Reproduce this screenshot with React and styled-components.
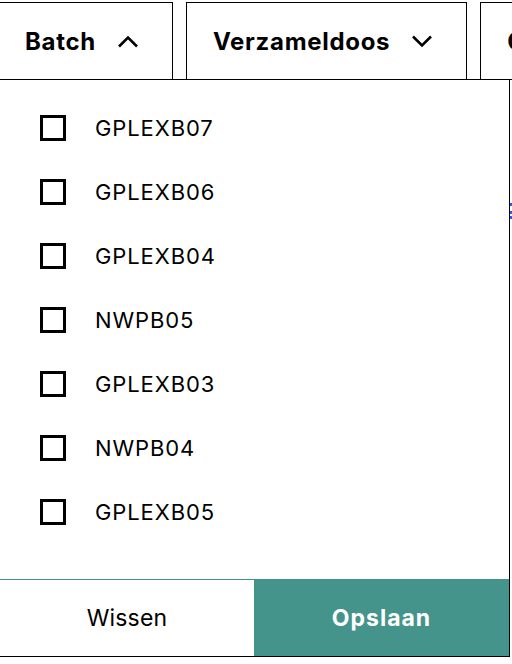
import React from "react";
import styled, { createGlobalStyle } from "styled-components";

const Global = createGlobalStyle`
  html, body { margin: 0; padding: 0; background: #fff; }
  body { width: 512px; height: 664px; overflow: hidden; font-family: Inter, "Noto Sans", sans-serif; color: #000; }
  * { box-sizing: border-box; }
`;

const Page = styled.div`
  position: relative;
  width: 512px;
  height: 664px;
  overflow: hidden;
`;

const TabRow = styled.div`
  display: flex;
  gap: 13px;
  margin-left: -2px;
  padding-top: 2px;
  width: 530px;
  overflow: hidden;
`;

const Tab = styled.button`
  flex: none;
  display: flex;
  align-items: center;
  gap: 21px;
  height: 78px;
  padding: 0 33px 0 26px;
  background: #fff;
  border: 1px solid #000;
  font-family: inherit;
  font-size: 24px;
  font-weight: 700;
  letter-spacing: 0.7px;
  color: #000;
  cursor: pointer;
`;

const Content = styled.div`
  display: flex;
  justify-content: flex-end;
  padding-top: 122px;
  margin-right: -14px;
`;

const LinkIcon = styled.svg`
  display: block;
  width: 18px;
  height: 18px;
`;

const Panel = styled.div`
  position: absolute;
  top: 79px;
  left: -1px;
  width: 511px;
  height: 578px;
  background: #fff;
  border: 1px solid #000;
  display: flex;
  flex-direction: column;
`;

const List = styled.ul`
  list-style: none;
  margin: 0;
  padding: 16px 0 0 0;
  flex: 1;
`;

const Row = styled.li`
  display: flex;
  align-items: center;
  gap: 29px;
  height: 64px;
  padding-left: 40px;
  font-size: 22px;
  font-weight: 400;
  letter-spacing: 0.9px;
`;

const Box = styled.span`
  width: 26px;
  height: 26px;
  border: 3px solid #000;
  background: #fff;
  flex: none;
`;

const Footer = styled.div`
  display: grid;
  grid-template-columns: 254px 1fr;
  height: 77px;
  border-top: 1px solid #44948c;
`;

const FooterButton = styled.button`
  border: 0;
  margin: 0;
  font-family: inherit;
  font-size: 23px;
  letter-spacing: ${(p) => (p.$primary ? "1px" : "0.2px")};
  font-weight: ${(p) => (p.$primary ? 700 : 400)};
  background: ${(p) => (p.$primary ? "#44948c" : "#fff")};
  color: ${(p) => (p.$primary ? "#fff" : "#000")};
  display: flex;
  align-items: center;
  justify-content: center;
  padding-bottom: 2px;
  cursor: pointer;
`;

const Chevron = ({ up }) => (
  <svg width="22" height="13" viewBox="0 0 22 13" fill="none">
    <polyline
      points={up ? "2,11.5 11,2.5 20,11.5" : "2,1.5 11,10.5 20,1.5"}
      stroke="#000"
      strokeWidth="2.6"
    />
  </svg>
);

const items = ["GPLEXB07", "GPLEXB06", "GPLEXB04", "NWPB05", "GPLEXB03", "NWPB04", "GPLEXB05"];

export default function App() {
  return (
    <Page>
      <Global />
      <TabRow>
        <Tab>
          Batch <Chevron up />
        </Tab>
        <Tab>
          Verzameldoos <Chevron />
        </Tab>
        <Tab>
          Categorie <Chevron />
        </Tab>
      </TabRow>
      <Content>
        <LinkIcon viewBox="0 0 18 18">
          <rect x="0" y="1" width="18" height="3" fill="#3355ee" />
          <rect x="0" y="9" width="18" height="3" fill="#3355ee" />
          <rect x="0" y="14" width="18" height="3" fill="#3355ee" />
        </LinkIcon>
      </Content>
      <Panel>
        <List>
          {items.map((it) => (
            <Row key={it}>
              <Box />
              {it}
            </Row>
          ))}
        </List>
        <Footer>
          <FooterButton>Wissen</FooterButton>
          <FooterButton $primary>Opslaan</FooterButton>
        </Footer>
      </Panel>
    </Page>
  );
}
